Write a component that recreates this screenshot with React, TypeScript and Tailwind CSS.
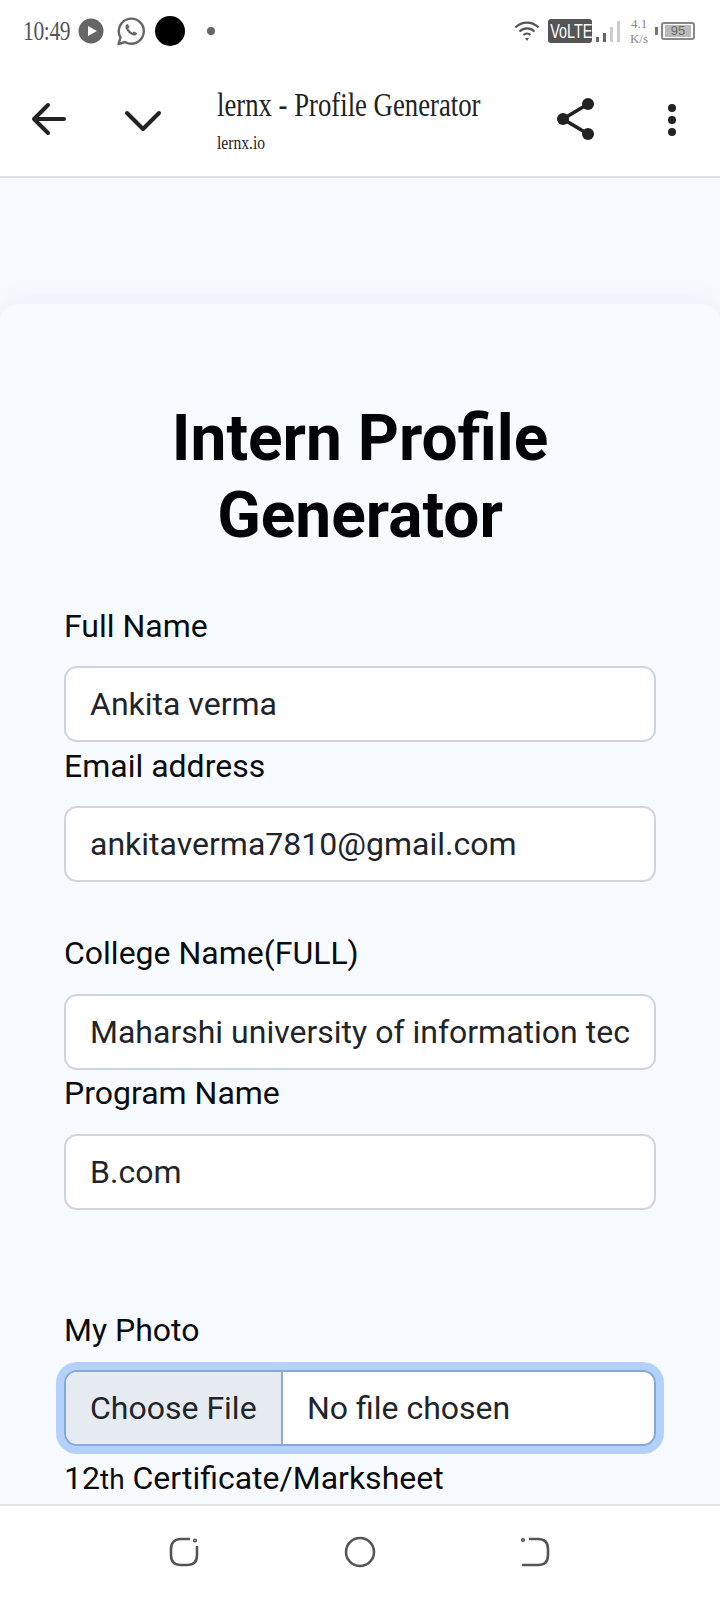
import React from "react";

const sans = "font-['Roboto',sans-serif]";

function Field({ label, value, labelClass }: { label: string; value: string; labelClass: string }) {
  return (
    <div>
      <label className={`block text-[32px] leading-[36px] text-[#0a0c10] ${labelClass}`}>{label}</label>
      <div className="h-[76px] rounded-[13px] border-2 border-[#d0d4dc] bg-white pl-[24px] pr-[24px] pt-[1px] text-[32px] leading-[71px] text-[#212529]">
        <div className="overflow-hidden whitespace-nowrap">{value}</div>
      </div>
    </div>
  );
}

function StatusBar() {
  return (
    <div className="h-[62px] flex items-center pl-[23px] pr-[25px] justify-between">
      <div className="flex items-center">
        <span className="font-['Liberation_Serif',serif] text-[28px] text-[#555] inline-block w-[54px] origin-left scale-x-[0.77] tracking-[-0.5px]">10:49</span>
        <svg width="26" height="26" viewBox="0 0 26 26" className="ml-[1px]">
          <circle cx="13" cy="13" r="12.5" fill="#666" />
          <path d="M10 8l9 5-9 5z" fill="#fff" />
        </svg>
        <svg width="30" height="30" viewBox="0 0 30 30" className="ml-[12px]" fill="none">
          <path d="M2.5 28l2-6.5A12.5 12.5 0 1 1 9 26z" stroke="#666" strokeWidth="2.4" strokeLinejoin="round" />
          <path d="M10.5 8.5c-1.5 1-1.5 3 0 5.5s4.5 5 7 5.5c2 .3 3.5-1 3.7-2.3l-3.2-1.8-1.4 1.3c-1.5-.5-3.6-2.6-4.3-4.2l1.2-1.4-1.7-3z" fill="#666" />
        </svg>
        <div className="ml-[9px] w-[30px] h-[30px] rounded-full bg-black" />
        <div className="ml-[22px] w-[8px] h-[8px] rounded-full bg-[#666]" />
      </div>
      <div className="flex items-center">
        <svg width="26" height="22" viewBox="0 0 26 22" fill="none" stroke="#555" strokeWidth="2.2">
          <path d="M1.5 7.5a16 16 0 0 1 23 0" />
          <path d="M5.5 11.5a10.5 10.5 0 0 1 15 0" />
          <path d="M9.5 15a5 5 0 0 1 7 0" />
          <path d="M11 18h4l-2 3z" fill="#555" stroke="none" />
        </svg>
        <div className="ml-[8px] w-[44px] h-[24px] rounded-[3px] bg-[#555] text-white text-[20px] leading-[24px] font-['Liberation_Sans',sans-serif] overflow-hidden">
          <span className="inline-block origin-left scale-x-[0.72] pl-[3px]">VoLTE</span>
        </div>
        <div className="ml-[4px] flex items-end gap-[4px] h-[22px] w-[26px]">
          <div className="w-[3px] h-[5px] bg-[#666]" />
          <div className="w-[3px] h-[9px] bg-[#666]" />
          <div className="w-[3px] h-[15px] bg-[#ccc]" />
          <div className="w-[3px] h-[21px] bg-[#ccc]" />
        </div>
        <div className="ml-[7px] w-[20px] text-center text-[13px] leading-[15px] text-[#888] font-['Liberation_Serif',serif]">
          4.1<br />K/s
        </div>
        <div className="ml-[6px] w-[3px] h-[8px] bg-[#777]" />
        <div className="ml-[3px] w-[34px] h-[18px] rounded-[3px] border-2 border-[#888] flex items-center justify-center">
          <div className="w-[26px] h-[12px] bg-[#bbb] text-[#666] text-[13px] leading-[12px] text-center font-['Liberation_Sans',sans-serif]">95</div>
        </div>
      </div>
    </div>
  );
}

function AppBar() {
  return (
    <div className="h-[116px] flex bg-white border-b-2 border-[#dbe2ec]">
      <svg width="36" height="34" viewBox="0 0 36 34" fill="none" stroke="#222" strokeWidth="4" strokeLinecap="round" strokeLinejoin="round" className="ml-[31px] mt-[40px]">
        <path d="M33 17H3M17 3L3 17l14 14" />
      </svg>
      <svg width="38" height="24" viewBox="0 0 38 24" fill="none" stroke="#222" strokeWidth="4" strokeLinecap="round" strokeLinejoin="round" className="ml-[57px] mt-[47px]">
        <path d="M3 4l16 16L35 4" />
      </svg>
      <div className="ml-[55px] w-[318px] pt-[23px] font-['Liberation_Serif',serif] text-[#222]">
        <div className="text-[33px] leading-[40px] whitespace-nowrap origin-left scale-x-[0.81]">lernx - Profile Generator</div>
        <div className="text-[19px] leading-[24px] mt-[6px] whitespace-nowrap origin-left scale-x-[0.82]">lernx.io</div>
      </div>
      <svg width="40" height="44" viewBox="0 0 40 44" fill="none" className="ml-[21px] mt-[35px]">
        <path d="M32 7L7 22l25 15" stroke="#222" strokeWidth="3.6" />
        <circle cx="32" cy="7" r="6" fill="#222" />
        <circle cx="7" cy="22" r="6" fill="#222" />
        <circle cx="32" cy="37" r="6" fill="#222" />
      </svg>
      <svg width="12" height="36" viewBox="0 0 12 36" className="ml-[70px] mt-[40px]" fill="#222">
        <circle cx="6" cy="6" r="4" />
        <circle cx="6" cy="18" r="4" />
        <circle cx="6" cy="30" r="4" />
      </svg>
    </div>
  );
}

function FileField() {
  return (
    <div className="mt-[102px]">
      <label className="block text-[32px] leading-[36px] text-[#0a0c10] mb-[22px]">My Photo</label>
      <div className="h-[76px] rounded-[13px] border-2 border-[#86a9dc] bg-white shadow-[0_0_0_8px_#b3d1fb] flex text-[32px] leading-[71px] text-[#212529] overflow-hidden">
        <div className="w-[217px] bg-[#e6ebf1] border-r-2 border-[#8fa9cf] pl-[24px] pt-[1px] whitespace-nowrap">Choose File</div>
        <div className="pl-[24px] pt-[1px] whitespace-nowrap">No file chosen</div>
      </div>
    </div>
  );
}

function BottomNav() {
  return (
    <div className="h-[96px] bg-white border-t-2 border-[#e3e5e8] flex items-start">
      <svg width="30" height="30" viewBox="0 0 30 30" fill="none" stroke="#555" strokeWidth="2.6" strokeLinecap="round" className="ml-[169px] mt-[31px]">
        <path d="M20 2h-8C5.500 2 2 5.500 2 12v6c0 6.500 3.500 10 10 10h6c6.500 0 10-3.500 10-10V10" />
        <circle cx="26" cy="3.500" r="0.8" />
      </svg>
      <svg width="32" height="32" viewBox="0 0 32 32" fill="none" stroke="#555" strokeWidth="2.6" className="ml-[145px] mt-[30px]">
        <circle cx="16" cy="16" r="14" />
      </svg>
      <svg width="30" height="30" viewBox="0 0 30 30" fill="none" stroke="#555" strokeWidth="2.6" strokeLinecap="round" className="ml-[144px] mt-[31px]">
        <path d="M10 2h8c6.500 0 10 3.500 10 10v6c0 6.500-3.500 10-10 10H3" />
        <circle cx="3" cy="3" r="0.8" />
      </svg>
    </div>
  );
}

export default function App() {
  return (
    <div className={`w-[720px] h-[1600px] flex flex-col bg-white overflow-hidden ${sans}`}>
      <StatusBar />
      <AppBar />
      <main className="flex-1 overflow-hidden bg-[#f6faff] pt-[126px]">
        <div className="rounded-t-[18px] bg-[#f7fbff] shadow-[0_-6px_24px_rgba(60,80,120,0.05)] h-full pl-[64px] pr-[64px] pt-[96px]">
          <h1 className="text-center text-[64px] leading-[77px] font-bold text-[#030407] w-[592px]">Intern Profile Generator</h1>
          <div className="w-[592px] mt-[54px]">
            <Field label="Full Name" value="Ankita verma" labelClass="mb-[22px]" />
            <Field label="Email address" value="ankitaverma7810@gmail.com" labelClass="mb-[22px] mt-[6px]" />
            <Field label="College Name(FULL)" value="Maharshi university of information tech" labelClass="mb-[23px] mt-[53px]" />
            <Field label="Program Name" value="B.com" labelClass="mb-[23px] mt-[5px]" />
            <FileField />
            <label className="block text-[32px] leading-[36px] text-[#0a0c10] mt-[14px]">
              12<span className="text-[28px]">th</span> Certificate/Marksheet
            </label>
          </div>
        </div>
      </main>
      <BottomNav />
    </div>
  );
}
